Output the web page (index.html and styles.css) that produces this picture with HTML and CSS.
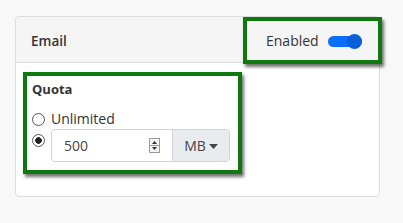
FILE: index.html
```html
<!DOCTYPE html>
<html lang="en">
<head>
    <meta charset="UTF-8">
    <meta name="viewport" content="width=device-width, initial-scale=1.0">
    <title>Email Quota</title>
    <link rel="stylesheet" href="styles.css">
</head>
<body>
    <div class="card">
        <div class="card-header">
            <span class="card-title">Email</span>
            <div class="highlight enabled-box">
                <span>Enabled</span>
                <span class="toggle"><span class="knob"></span></span>
            </div>
        </div>
        <div class="card-body">
            <div class="highlight quota-box">
                <div class="quota-label">Quota</div>
                <label class="radio-row">
                    <input type="radio" name="quota">
                    <span>Unlimited</span>
                </label>
                <div class="radio-row top">
                    <input type="radio" name="quota" checked>
                    <div class="input-group">
                        <div class="number-input">
                            <span>500</span>
                            <svg class="spinner" width="11" height="15" viewBox="0 0 11 15">
                                <rect x="0.5" y="0.5" width="10" height="14" fill="#f4f4f4" stroke="#9a9a9a"/>
                                <line x1="1" y1="7.5" x2="10" y2="7.5" stroke="#9a9a9a"/>
                                <path d="M3 6 L5.5 3 L8 6 Z" fill="#333"/>
                                <path d="M3 9 L5.5 12 L8 9 Z" fill="#333"/>
                            </svg>
                        </div>
                        <div class="addon">MB
                            <svg class="caret" width="9" height="5" viewBox="0 0 9 5"><path d="M0 0 L9 0 L4.5 5 Z" fill="#444"/></svg>
                        </div>
                    </div>
                </div>
            </div>
        </div>
    </div>
</body>
</html>
```

FILE: styles.css
```css
body {
  font-family: "Open Sans", Arial, sans-serif;
  margin: 0;
  padding: 16px 0 0 15px;
  background: #f8f8f8;
  color: #333;
}

.card {
  width: 363px;
  height: 179px;
  background: #fff;
  border: 1px solid #ddd;
  border-radius: 4px;
}

.card-header {
  height: 45px;
  background: #f5f5f5;
  border-bottom: 1px solid #ddd;
  border-radius: 4px 4px 0 0;
  display: flex;
  justify-content: space-between;
  align-items: stretch;
  padding-left: 15px;
}

.card-title {
  align-self: center;
  font-size: 13.5px;
  font-weight: 600;
  margin-top: 2px;
}

.highlight {
  border: 4px solid #0e7a0e;
  box-shadow: 2px 3px 3px rgba(0, 0, 0, 0.55);
}

.enabled-box {
  box-sizing: border-box;
  width: 139px;
  height: 47px;
  margin-right: -3px;
  display: flex;
  align-items: center;
  padding-left: 19px;
  gap: 9px;
  font-size: 14px;
  background: #f5f5f5;
}

.toggle {
  position: relative;
  width: 34px;
  height: 11px;
  border-radius: 6px;
  background: #0d6efd;
  margin-top: 1px;
}

.knob {
  position: absolute;
  right: 0;
  top: -2px;
  width: 15px;
  height: 15px;
  border-radius: 50%;
  background: #0a5fd8;
}

.card-body {
  padding: 9px 0 0 7px;
}

.quota-box {
  box-sizing: border-box;
  width: 219px;
  height: 102px;
  padding: 3px 0 0 5px;
}

.quota-label {
  font-size: 13px;
  font-weight: 700;
  line-height: 20px;
  margin-bottom: 11px;
}

.radio-row {
  display: flex;
  align-items: center;
  gap: 6px;
  font-size: 14px;
  line-height: 18px;
}

.radio-row.top {
  align-items: flex-start;
  margin-top: 1px;
}

.radio-row input {
  appearance: none;
  margin: 0;
  width: 13px;
  height: 13px;
  border: 1px solid #555;
  border-radius: 50%;
  background: #fff;
  box-sizing: border-box;
  flex: none;
}

.radio-row input:checked {
  background: radial-gradient(circle, #222 0, #222 3px, #fff 3.6px);
}

.radio-row.top input {
  margin-top: 5px;
}

.input-group {
  display: flex;
  height: 33px;
  border: 1px solid #ced4da;
  border-radius: 4px;
  box-sizing: border-box;
  width: 179px;
}

.number-input {
  width: 120px;
  display: flex;
  align-items: center;
  justify-content: space-between;
  padding: 0 12px;
  box-sizing: border-box;
  font-size: 14px;
  color: #444;
}

.spinner {
  display: block;
}

.addon {
  flex: 1;
  background: #e9ecef;
  border-left: 1px solid #ced4da;
  border-radius: 0 3px 3px 0;
  display: flex;
  align-items: center;
  justify-content: center;
  gap: 3px;
  font-size: 14px;
  color: #444;
}

.caret {
  display: block;
  margin-top: 1px;
}
```
